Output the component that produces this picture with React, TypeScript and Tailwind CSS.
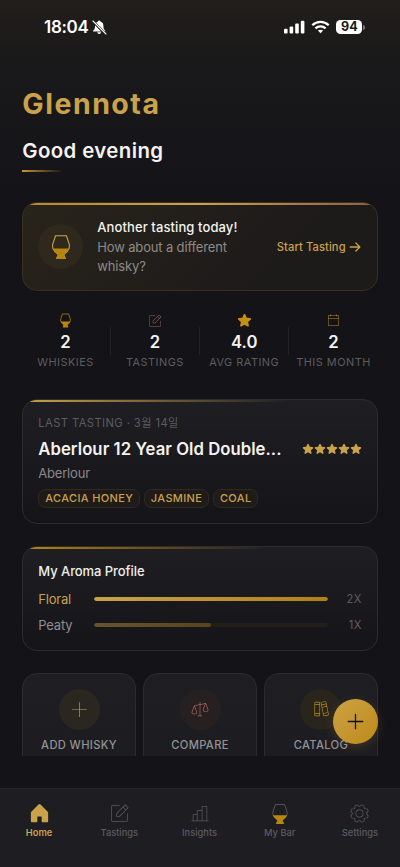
import React from 'react';
import {
  PiBooksThin,
  PiCalendarBlankThin,
  PiChartBarThin,
  PiGearThin,
  PiHouseFill,
  PiNotePencilThin,
  PiPlusThin,
  PiPlus,
  PiScalesThin,
  PiStarFill,
  PiArrowRightBold,
} from 'react-icons/pi';

function Glass({ size, line = '#c9a24a', width = 1.1 }: { size: number; line?: string; width?: number }) {
  return (
    <svg width={size} height={size} viewBox="-13 -13 26 26" fill="none">
      <path
        d="M-5.4 -11.3H5.4L8 -3.6C8.7 -1.6 8.5 0.4 7.7 2.4C6.8 4.6 4.8 6 3 7.2V8.4L4.4 11.2H-4.4L-3 8.4V7.2C-4.8 6 -6.8 4.6 -7.7 2.4C-8.5 0.4 -8.7 -1.6 -8 -3.6Z"
        stroke={line}
        strokeWidth={width}
        strokeLinejoin="round"
      />
      <path d="M-8.2 1.6H8.2C7 4.6 5 6 3.2 7.2V8.4L4.8 11.7H-4.8L-3.2 8.4V7.2C-5 6 -7 4.6 -8.2 1.6Z" fill="#b8860b" />
    </svg>
  );
}

function StatusBar() {
  return (
    <div className="flex h-[54px] items-center justify-between pr-[35px] pl-[44px] text-white">
      <div className="flex items-center gap-[3px]">
        <span className="text-[17px] leading-[20px] font-semibold tracking-[-0.3px]">18:04</span>
        <svg width="15" height="15" viewBox="0 0 15 15" fill="none">
          <path
            d="M7.2 0.6C6.6 0.6 6.1 1 6 1.6C4 2.2 3 3.8 3 6C3 8.8 2.3 9.6 1.3 10.4C0.8 10.9 1 11.5 1.7 11.5H12.7C13.4 11.5 13.6 10.9 13.1 10.4C12.1 9.6 11.4 8.8 11.4 6C11.4 3.8 10.4 2.2 8.4 1.6C8.3 1 7.8 0.6 7.2 0.6ZM5.2 12.3C5.5 13.5 6.2 14 7.2 14C8.2 14 8.9 13.5 9.2 12.3Z"
            fill="#fff"
          />
          <path d="M0.8 1.2L13.6 14" stroke="#1c1a19" strokeWidth="2.6" />
          <path d="M1 1L14 14" stroke="#fff" strokeWidth="1.1" strokeLinecap="round" />
        </svg>
      </div>
      <div className="flex items-center">
        <svg width="21" height="14" viewBox="0 0 21 14" fill="#fff">
          <rect x="0" y="8.8" width="3.6" height="4.6" rx="1" />
          <rect x="5.6" y="6.4" width="3.6" height="7" rx="1" />
          <rect x="11.2" y="3.6" width="3.6" height="9.8" rx="1" />
          <rect x="16.8" y="0.8" width="3.6" height="12.6" rx="1" />
        </svg>
        <svg className="ml-[6px]" width="19" height="14" viewBox="0 0 19 14" fill="none" stroke="#fff" strokeWidth="2.3">
          <path d="M1.3 5.3C6 0.7 13 0.7 17.7 5.3" />
          <path d="M4.4 8.4C7.3 5.7 11.7 5.7 14.6 8.4" />
          <path d="M6.9 10.6C8.4 9.4 10.6 9.4 12.1 10.6L9.5 13.3Z" fill="#fff" stroke="none" />
        </svg>
        <div className="ml-[6px] flex h-[14px] w-[26px] items-center justify-center rounded-[4.5px] bg-white text-[12.5px] leading-[14px] font-bold text-[#1c1a19]">
          94
        </div>
        <div className="ml-[1px] h-[5px] w-[1.6px] rounded-r-full bg-[#77767a]" />
      </div>
    </div>
  );
}

const card = 'relative overflow-hidden rounded-[15px] border border-[#2c2b30]';

function Stat({ icon, value, label }: { icon: React.ReactNode; value: string; label: string }) {
  return (
    <div className="flex min-w-0 flex-1 flex-col items-center">
      <div className="flex h-[15px] items-center">{icon}</div>
      <div className="mt-[4px] text-[16.7px] leading-[20px] font-semibold text-[#f4f2ee]">{value}</div>
      <div className="mt-[3px] text-[10.9px] leading-[14px] tracking-[0.5px] whitespace-nowrap text-[#5d5c5e]">{label}</div>
    </div>
  );
}

function Divider() {
  return <div className="mt-[14px] h-[28px] w-px shrink-0 bg-[#222126]" />;
}

function Chip({ children }: { children: string }) {
  return (
    <span className="flex h-[19px] items-center rounded-[7.5px] border border-[#302a20] bg-[#1f1b19] px-[6px] text-[11px] leading-none font-medium tracking-[0.35px] whitespace-nowrap text-[#c9a24a]">
      {children}
    </span>
  );
}

function Aroma({ name, count, active }: { name: string; count: string; active?: boolean }) {
  return (
    <div className="flex h-[20px] items-center">
      <span className={`w-[56px] text-[13px] leading-[20px] tracking-[-0.2px] ${active ? 'text-[#c9a24a]' : 'text-[#8f8e90]'}`}>{name}</span>
      <div className="h-[4px] w-[234px] overflow-hidden rounded-full bg-[#222019]">
        <div
          className={
            active
              ? 'h-full w-full rounded-full bg-linear-to-r from-[#c9a24a] to-[#b1810f]'
              : 'h-full w-1/2 rounded-full bg-linear-to-r from-[#63542f] to-[#594519]'
          }
        />
      </div>
      <span className="flex-1 text-right text-[11.2px] leading-[20px] tracking-[0.4px] text-[#5d5c5e]">{count}</span>
    </div>
  );
}

function Action({ icon, label, tint }: { icon: React.ReactNode; label: string; tint: string }) {
  return (
    <div className="flex h-[112px] flex-1 flex-col items-center rounded-[15px] border border-[#2c2b30] bg-linear-to-b from-[#1f1e22] to-[#1c1b20] pt-[15px]">
      <div className={`flex size-[41px] items-center justify-center rounded-full ${tint}`}>{icon}</div>
      <div className="mt-[7px] text-[11.2px] leading-[16px] font-medium tracking-[0.35px] whitespace-nowrap text-[#939294]">{label}</div>
    </div>
  );
}

function NavItem({ icon, label, active }: { icon: React.ReactNode; label: string; active?: boolean }) {
  return (
    <div className={`flex flex-1 flex-col items-center ${active ? 'text-[#c9a24a]' : 'text-[#5c5b60]'}`}>
      <div className="flex h-[23px] items-center">{icon}</div>
      <div className={`mt-[2px] text-[9.3px] leading-[12px] ${active ? 'font-semibold' : 'font-medium'}`}>{label}</div>
    </div>
  );
}

export default function App() {
  return (
    <div className="relative flex h-[867px] w-[400px] flex-col overflow-hidden bg-[#141318] font-['Inter','Noto_Sans_CJK_KR',sans-serif]">
      <div className="h-[756px] overflow-hidden bg-[linear-gradient(180deg,#211e1b_0px,#1b1a1a_50px,#18181a_90px,#141318_200px)]">
        <StatusBar />
        <div className="px-[22.3px]">
          <h1 className="mt-[32px] text-[28.5px] leading-[36px] font-bold tracking-[1.5px] text-[#c9a24a]">Glennota</h1>
          <p className="mt-[16px] text-[20.4px] leading-[26px] font-semibold tracking-[0.4px] text-[#f4f2ee]">Good evening</p>
          <div className="mt-[6px] h-[2px] w-[41px] bg-linear-to-r from-[#c9982e] to-transparent" />

          <div className="relative mt-[30px] flex h-[89px] items-center overflow-hidden rounded-[15px] border border-[#38301f] bg-[linear-gradient(135deg,#29241a,#1d1a1a_70%)] px-[15px]">
            <div className="absolute inset-x-0 top-0 h-[2px] bg-linear-to-r from-[#b8862a] via-[#c9a24a] to-[#8f5c46]" />
            <div className="flex size-[45px] shrink-0 items-center justify-center rounded-full bg-[#2f281c]">
              <Glass size={26} />
            </div>
            <div className="ml-[14px] w-[160px]">
              <div className="text-[13px] leading-[20px] font-medium tracking-[0.1px] whitespace-nowrap text-[#f4f2ee]">Another tasting today!</div>
              <div className="mt-[1px] text-[13px] leading-[19px] tracking-[-0.15px] text-[#8f8b86]">
                How about a different
                <br />
                whisky?
              </div>
            </div>
            <div className="ml-auto flex items-center gap-[2px] text-[#c9a24a]">
              <span className="text-[11.2px] leading-[16px] font-medium tracking-[0.08px] whitespace-nowrap">Start Tasting</span>
              <PiArrowRightBold size={14} />
            </div>
          </div>

          <div className="-ml-px mt-[22px] flex h-[58px]">
            <Stat icon={<Glass size={15} line="#b8860b" width={1.3} />} value="2" label="WHISKIES" />
            <Divider />
            <Stat icon={<PiNotePencilThin size={16} color="#8d6257" />} value="2" label="TASTINGS" />
            <Divider />
            <Stat icon={<PiStarFill size={15} color="#c6900f" />} value="4.0" label="AVG RATING" />
            <Divider />
            <Stat icon={<PiCalendarBlankThin size={15} color="#c08a35" />} value="2" label="THIS MONTH" />
          </div>

          <div className={`${card} mt-[28px] h-[125px] bg-linear-to-b from-[#1f1e23] to-[#151419] px-[15px]`}>
            <div className="absolute inset-x-0 top-0 h-[2px] bg-[linear-gradient(90deg,#c9a24a,transparent_75%)]" />
            <div className="mt-[15px] text-[11.2px] leading-[16px] tracking-[0.42px] text-[#5d5c5e]">LAST TASTING · 3월 14일</div>
            <div className="mt-[6px] flex h-[24px] items-center justify-between">
              <span className="text-[16.7px] leading-[24px] font-semibold tracking-[0.04px] whitespace-nowrap text-[#f4f2ee]">Aberlour 12 Year Old Double...</span>
              <span className="flex">
                {[0, 1, 2, 3, 4].map((i) => (
                  <PiStarFill key={i} size={12} color="#c9a24a" />
                ))}
              </span>
            </div>
            <div className="mt-[3px] text-[13px] leading-[18px] tracking-[-0.2px] text-[#8a898c]">Aberlour</div>
            <div className="mt-[7px] flex gap-[3.7px]">
              <Chip>ACACIA HONEY</Chip>
              <Chip>JASMINE</Chip>
              <Chip>COAL</Chip>
            </div>
          </div>

          <div className={`${card} mt-[22px] h-[104.5px] bg-linear-to-b from-[#1f1e23] to-[#151419] px-[15px]`}>
            <div className="absolute inset-x-0 top-0 h-[2px] bg-[linear-gradient(90deg,#b8860b,transparent_70%)]" />
            <div className="mt-[14px] text-[13px] leading-[20px] font-medium tracking-[-0.07px] text-[#f0eeea]">My Aroma Profile</div>
            <div className="mt-[8px] flex flex-col gap-[6px]">
              <Aroma name="Floral" count="2X" active />
              <Aroma name="Peaty" count="1X" />
            </div>
          </div>

          <div className="mt-[22px] flex gap-[7.5px]">
            <Action icon={<PiPlusThin size={21} color="#c9a24a" />} label="ADD WHISKY" tint="bg-[#2a2620]" />
            <Action icon={<PiScalesThin size={20} color="#b0675c" />} label="COMPARE" tint="bg-[#272021]" />
            <Action icon={<PiBooksThin size={20} color="#c08f14" />} label="CATALOG" tint="bg-[#29241c]" />
          </div>
        </div>
      </div>

      <button className="absolute top-[698.5px] left-[332.5px] flex size-[45px] items-center justify-center rounded-full bg-linear-to-br from-[#cda344] to-[#bd8a14] shadow-[0_3px_12px_rgba(201,162,74,0.18)]">
        <PiPlus size={21} color="#17130c" />
      </button>

      <nav className="mt-auto -ml-px flex h-[79px] w-[401px] border-t border-[#26252a] bg-[#1e1d22] pt-[13px]">
        <NavItem icon={<PiHouseFill size={23} />} label="Home" active />
        <NavItem icon={<PiNotePencilThin size={23} />} label="Tastings" />
        <NavItem icon={<PiChartBarThin size={22} />} label="Insights" />
        <NavItem icon={<Glass size={22} line="#5a595d" />} label="My Bar" />
        <NavItem icon={<PiGearThin size={23} />} label="Settings" />
      </nav>
    </div>
  );
}
